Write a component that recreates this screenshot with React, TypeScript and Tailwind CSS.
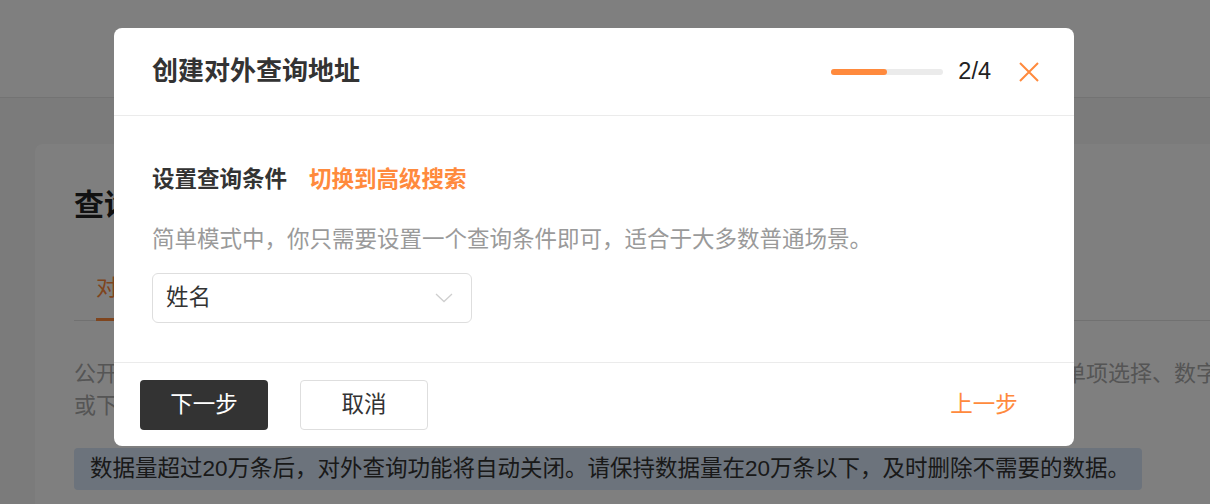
export default function App() {
  return (
    <div className="relative h-[504px] w-[1210px] overflow-hidden bg-[#f6f6f6] font-['Liberation_Sans','Noto_Sans_CJK_SC',sans-serif]">
      {/* page behind the dialog */}
      <div className="h-[98px] border-b border-[#e6e6e6] bg-white" />
      <div className="pl-[35px] pt-[46px]">
        <div className="w-[1300px] rounded-lg bg-white pl-[39px] pt-[39px] pb-10">
          <h1 className="text-[30px] font-bold leading-[44px] text-[#222]">查询设置</h1>
          <div className="mt-[46px] border-b border-[#e3e3e3] pl-[22px]">
            <div className="-mb-px inline-block border-b-[3px] border-[#ff8a3d] pb-[15px] text-[22px] leading-[30px] text-[#ff8a3d]">
              对外查询
            </div>
          </div>
          <div className="mt-[37px] text-[22px] leading-[32px] text-[#aaa]">
            <p className="whitespace-nowrap">
              公开后，任何人都可以通过对外查询地址搜索表单中的数据。查询条件支持的字段类型包括：单行文字单项选择、数字、日期
            </p>
            <p className="whitespace-nowrap">或下拉框字段，查询结果只展示你设置为公开的字段内容。</p>
          </div>
          <div className="mt-[26px] flex h-[42px] w-[1068px] items-center rounded bg-[#d8e6f8] pl-[16px] text-[22.5px] text-[#333]">
            数据量超过20万条后，对外查询功能将自动关闭。请保持数据量在20万条以下，及时删除不需要的数据。
          </div>
        </div>
      </div>

      {/* overlay */}
      <div className="absolute inset-0 bg-black/50" />

      {/* dialog */}
      <div className="absolute left-[114px] top-[28px] w-[960px] rounded-lg bg-white">
        <div className="flex h-[88px] items-center border-b border-[#ebebeb] pl-[38px] pr-[35px]">
          <h2 className="text-[26px] font-semibold text-[#333]">创建对外查询地址</h2>
          <div className="ml-auto flex items-center">
            <div className="h-[6px] w-[112px] rounded-full bg-[#ebebeb]">
              <div className="h-full w-1/2 rounded-full bg-[#ff8a3d]" />
            </div>
            <span className="ml-[15px] text-[23.5px] leading-none text-[#222]">2/4</span>
            <button className="ml-[28px] flex h-5 w-5 items-center justify-center">
              <svg width="20" height="20" viewBox="0 0 20 20" fill="none">
                <path d="M1 1L19 19M19 1L1 19" stroke="#ff8a3d" strokeWidth="2" />
              </svg>
            </button>
          </div>
        </div>

        <div className="pl-[38px] pt-[49px] pb-[39px]">
          <div className="flex items-center gap-[22px] text-[22.5px] font-semibold leading-[30px]">
            <span className="text-[#333]">设置查询条件</span>
            <span className="text-[#ff8a3d]">切换到高级搜索</span>
          </div>
          <p className="mt-[30px] text-[22.5px] leading-[30px] text-[#9a9a9a]">
            简单模式中，你只需要设置一个查询条件即可，适合于大多数普通场景。
          </p>
          <div className="mt-[18px] flex h-[50px] w-[320px] items-center rounded-md border border-[#dedede] pl-[13px] pr-[18px]">
            <span className="text-[22.5px] text-[#333]">姓名</span>
            <svg className="ml-auto" width="18" height="10" viewBox="0 0 18 10" fill="none">
              <path d="M1 1L9 8.5L17 1" stroke="#cfcfcf" strokeWidth="1.3" />
            </svg>
          </div>
        </div>

        <div className="flex items-center border-t border-[#ebebeb] px-[26px] pt-[17px] pb-[16px]">
          <button className="h-[50px] w-[128px] rounded bg-[#333] text-[22.5px] text-white">下一步</button>
          <button className="ml-8 h-[50px] w-[128px] rounded border border-[#dedede] bg-white text-[22.5px] text-[#333]">
            取消
          </button>
          <button className="ml-auto h-[50px] w-[128px] text-[22.5px] text-[#ff8a3d]">上一步</button>
        </div>
      </div>
    </div>
  );
}
